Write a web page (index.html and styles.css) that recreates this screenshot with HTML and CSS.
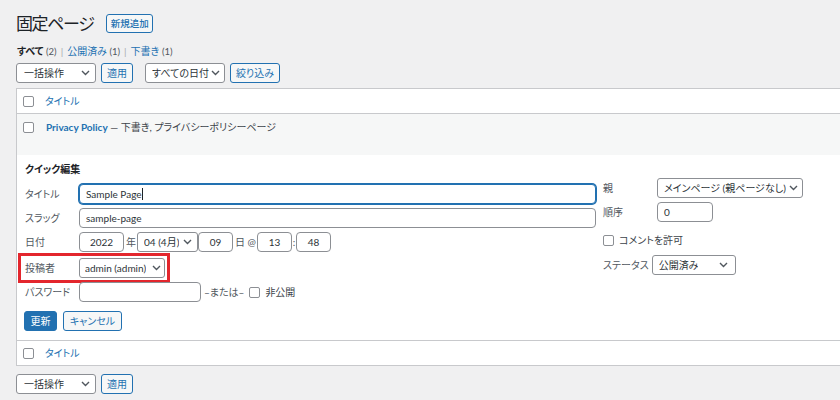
FILE: index.html
```html
<!DOCTYPE html>
<html lang="ja">
<head>
<meta charset="utf-8">
<title>固定ページ</title>
<link rel="stylesheet" href="styles.css">
</head>
<body>
<div class="wrap">
  <div class="page-header">
    <h1>固定ページ</h1>
    <span class="btn btn-new">新規追加</span>
  </div>
  <div class="subsubsub">
    <span><b class="current">すべて</b> <span class="count">(2)</span></span><span class="sep">|</span>
    <span><a class="link">公開済み</a> <span class="count">(1)</span></span><span class="sep">|</span>
    <span><a class="link">下書き</a> <span class="count">(1)</span></span>
  </div>
  <div class="tablenav">
    <span class="select w-bulk"><span class="val">一括操作</span><svg class="chev" width="9" height="6" viewBox="0 0 9 6"><path d="M1 1l3.5 3.5L8 1" fill="none" stroke="#50575e" stroke-width="1.4"/></svg></span>
    <span class="btn btn-apply">適用</span>
    <span class="select w-date"><span class="val">すべての日付</span><svg class="chev" width="9" height="6" viewBox="0 0 9 6"><path d="M1 1l3.5 3.5L8 1" fill="none" stroke="#50575e" stroke-width="1.4"/></svg></span>
    <span class="btn btn-filter">絞り込み</span>
  </div>

  <div class="list">
    <div class="row head"><span class="cb"></span><a class="link">タイトル</a></div>
    <div class="row alt"><span class="cb"></span><span class="row-title"><a class="link strong">Privacy Policy</a> — 下書き, プライバシーポリシーページ</span></div>
    <div class="quick-edit">
      <h4>クイック編集</h4>
      <div class="qe-cols">
        <div class="qe-left">
          <div class="field"><span class="label">タイトル</span><span class="input grow focus">Sample Page<span class="caret"></span></span></div>
          <div class="field"><span class="label">スラッグ</span><span class="input grow">sample-page</span></div>
          <div class="field"><span class="label">日付</span>
            <span class="input center w-year">2022</span><span class="unit">年</span>
            <span class="select w-month"><span class="val">04 (4月)</span><svg class="chev" width="9" height="6" viewBox="0 0 9 6"><path d="M1 1l3.5 3.5L8 1" fill="none" stroke="#50575e" stroke-width="1.4"/></svg></span>
            <span class="input center w-day">09</span><span class="unit">日 @</span>
            <span class="input center w-time">13</span><span class="colon">:</span><span class="input center w-time">48</span>
          </div>
          <div class="field author"><span class="label">投稿者</span>
            <span class="select w-author"><span class="val">admin (admin)</span><svg class="chev" width="9" height="6" viewBox="0 0 9 6"><path d="M1 1l3.5 3.5L8 1" fill="none" stroke="#50575e" stroke-width="1.4"/></svg></span>
            <span class="highlight"></span>
          </div>
          <div class="field"><span class="label">パスワード</span><span class="input w-pass"></span><span class="or">–または–</span><span class="cb cb-inline"></span><span>非公開</span></div>
        </div>
        <div class="qe-right">
          <div class="field"><span class="label">親</span><span class="select w-parent"><span class="val">メインページ (親ページなし)</span><svg class="chev" width="9" height="6" viewBox="0 0 9 6"><path d="M1 1l3.5 3.5L8 1" fill="none" stroke="#50575e" stroke-width="1.4"/></svg></span></div>
          <div class="field"><span class="label">順序</span><span class="input w-order">0</span></div>
          <div class="field check-row"><span class="cb cb-inline first"></span><span>コメントを許可</span></div>
          <div class="field status-row"><span class="label auto">ステータス</span><span class="select w-status"><span class="val">公開済み</span><svg class="chev" width="9" height="6" viewBox="0 0 9 6"><path d="M1 1l3.5 3.5L8 1" fill="none" stroke="#50575e" stroke-width="1.4"/></svg></span></div>
        </div>
      </div>
      <div class="actions">
        <span class="btn btn-primary">更新</span>
        <span class="btn btn-cancel">キャンセル</span>
      </div>
    </div>
    <div class="row foot"><span class="cb"></span><a class="link">タイトル</a></div>
  </div>

  <div class="tablenav bottom">
    <span class="select w-bulk"><span class="val">一括操作</span><svg class="chev" width="9" height="6" viewBox="0 0 9 6"><path d="M1 1l3.5 3.5L8 1" fill="none" stroke="#50575e" stroke-width="1.4"/></svg></span>
    <span class="btn btn-apply">適用</span>
  </div>
</div>
</body>
</html>
```

FILE: styles.css
```css
* { box-sizing: border-box; }

body {
  margin: 0;
  background: #f0f0f1;
  font-family: "Lato", "Noto Sans CJK JP", sans-serif;
  font-size: 10px;
  line-height: 14px;
  color: #3c434a;
  font-feature-settings: "palt";
  overflow: hidden;
}

.wrap { padding-left: 16px; }

.link { color: #2271b1; text-decoration: none; }
.strong { font-weight: 700; }

/* header */
.page-header {
  display: flex;
  align-items: center;
  height: 19px;
  margin-top: 14px;
}
.page-header h1 {
  margin: 0;
  font-size: 17px;
  font-weight: 400;
  line-height: 19px;
  letter-spacing: -1.4px;
  color: #1d2327;
}

.btn {
  display: inline-flex;
  align-items: center;
  justify-content: center;
  height: 20px;
  border: 1px solid #2271b1;
  border-radius: 3px;
  background: #f6f7f7;
  color: #2271b1;
  font-size: 10px;
  white-space: nowrap;
}
.btn-new { height: 19px; width: 47px; margin-left: 13px; font-size: 9.5px; font-weight: 500; }
.btn-apply { width: 32px; margin-left: 5px; }
.btn-filter { width: 50px; margin-left: 5px; }
.btn-primary { width: 33px; background: #2271b1; color: #fff; margin-left: -1px; }
.btn-cancel { width: 59px; margin-left: 6px; }

/* views */
.subsubsub {
  display: flex;
  align-items: center;
  gap: 4px;
  height: 14px;
  margin: 11px 0 0 1px;
  font-size: 10px;
  color: #646970;
}
.current { color: #1d2327; font-weight: 700; }
.count { color: #50575e; font-size: 9.5px; }
.sep { color: #a7aaad; }

/* tablenav */
.tablenav {
  display: flex;
  align-items: center;
  height: 20px;
  margin-top: 5px;
}
.tablenav.bottom { margin-top: 8px; }

.select {
  display: inline-flex;
  align-items: center;
  justify-content: space-between;
  height: 20px;
  padding: 0 5px 0 7px;
  border: 1px solid #8c8f94;
  border-radius: 3px;
  background: #fff;
  color: #2c3338;
  white-space: nowrap;
  flex: none;
}
.val { overflow: hidden; }
.chev { flex: none; margin-left: 2px; }
.w-bulk { width: 80px; }
.w-date { width: 80px; margin-left: 12px; padding-right: 4px; padding-left: 6px; }

/* list */
.list {
  margin-top: 5px;
  background: #fff;
  border: 1px solid #c8c9cc;
  border-right: none;
}
.row {
  display: flex;
  align-items: center;
  height: 25px;
  padding-left: 6px;
}
.row.head { border-bottom: 1px solid #c8c9cc; }
.row.alt {
  height: 41px;
  align-items: flex-start;
  padding-top: 6px;
  background: #f6f7f7;
}
.row.alt .cb { margin-top: 2px; }
.row-title { margin-left: 1px; color: #3c434a; }
.row.foot { border-top: 1px solid #c8c9cc; }

.cb {
  width: 11px;
  height: 11px;
  flex: none;
  margin-right: 11px;
  border: 1px solid #8c8f94;
  border-radius: 2px;
  background: #fff;
}

/* quick edit */
.quick-edit {
  height: 185px;
  padding: 7px 0 0 8px;
}
.quick-edit h4 {
  margin: 0;
  font-size: 10px;
  line-height: 14px;
  font-weight: 700;
  color: #1d2327;
}
.qe-cols {
  display: flex;
  margin-top: 2px;
}
.qe-left {
  width: 571px;
  padding-top: 6px;
}
.qe-right {
  margin-left: 7px;
}

.field {
  position: relative;
  display: flex;
  align-items: center;
  height: 20px;
  white-space: nowrap;
}
.field + .field { margin-top: 4px; }
.field.author { margin-top: 6px; }
.label {
  width: 54px;
  flex: none;
  color: #50575e;
}
.label.auto { width: auto; margin-right: 3px; }

.input {
  display: inline-flex;
  align-items: center;
  height: 20px;
  padding: 0 6px;
  border: 1px solid #8c8f94;
  border-radius: 4px;
  background: #fff;
  color: #2c3338;
  flex: none;
}
.input.grow { flex: 1; }
.input.center { justify-content: center; }
.input.focus {
  border-color: #2271b1;
  box-shadow: 0 0 0 1px #2271b1;
}
.caret {
  display: inline-block;
  width: 1px;
  height: 12px;
  background: #1d2327;
}

.w-year { width: 45px; }
.w-month { width: 61px; padding-left: 6px; padding-right: 5px; }
.w-day { width: 35px; }
.w-time { width: 35px; }
.w-author { width: 86px; padding-left: 5px; padding-right: 3px; }
.w-pass { width: 122px; }
.w-parent { width: 146px; padding-left: 6px; padding-right: 4px; }
.w-order { width: 56px; }
.w-status { width: 84px; padding-left: 6px; padding-right: 7px; }

.unit { margin: 0 1px 0 2px; color: #50575e; }
.colon { width: 4px; text-align: center; color: #50575e; }
.or { margin-left: 3px; color: #50575e; }
.cb-inline { margin: 0 5px 0 5px; }
.cb-inline.first { margin-left: 0; }
.check-row { margin-top: 8px !important; }
.status-row { margin-top: 5px !important; }

.highlight {
  position: absolute;
  left: -7px;
  top: -5px;
  width: 152px;
  height: 30px;
  border: 3px solid #e3262d;
  pointer-events: none;
}

.actions {
  display: flex;
  margin-top: 9px;
}
```
